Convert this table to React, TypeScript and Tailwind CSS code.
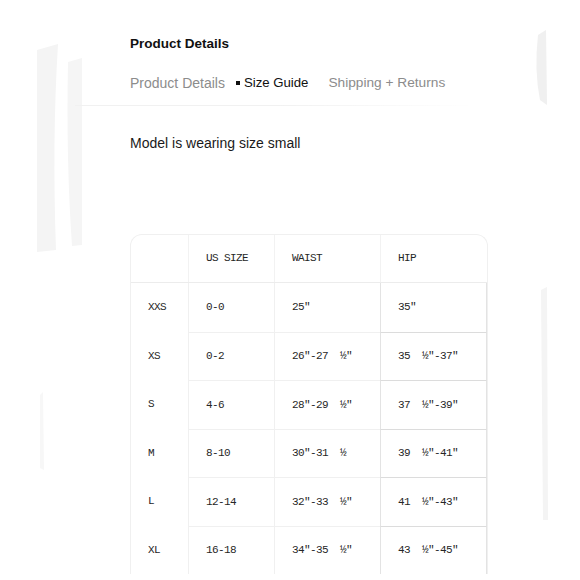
import React from "react";

const rows: [string, string, string, string][] = [
  ["XXS", "0-0", '25"', '35"'],
  ["XS", "0-2", '26"-27  ½"', '35  ½"-37"'],
  ["S", "4-6", '28"-29  ½"', '37  ½"-39"'],
  ["M", "8-10", '30"-31  ½', '39  ½"-41"'],
  ["L", "12-14", '32"-33  ½"', '41  ½"-43"'],
  ["XL", "16-18", '34"-35  ½"', '43  ½"-45"'],
];

function Backdrop() {
  return (
    <svg
      className="pointer-events-none absolute inset-0"
      width="580"
      height="580"
      viewBox="0 0 580 580"
    >
      <path d="M37 50 L58 44 Q52 140 56 250 L37 252 Z" fill="#f4f4f4" />
      <path d="M68 62 L82 58 L82 245 L72 246 Q66 160 68 62 Z" fill="#f5f5f5" />
      <path d="M40 395 L43 392 L44 470 L40 468 Z" fill="#f7f7f7" />
      <path d="M538 35 L546 30 L547 105 L540 100 Q534 70 538 35 Z" fill="#f0f0f0" />
      <path d="M541 290 L547 287 L548 520 L543 520 Z" fill="#f4f4f4" />
    </svg>
  );
}

export default function App() {
  return (
    <div className="relative w-[580px] h-[580px] overflow-hidden bg-white font-['Liberation_Sans',Arial,sans-serif] text-[#111]">
      <Backdrop />
      <div className="relative pl-[75px] pt-[35px]">
        <div className="pl-[55px]">
          <h2 className="text-[13.5px] font-bold leading-[18px] text-[#111]">Product Details</h2>
          <div className="mt-[20px] flex items-center leading-[20px]">
            <span className="text-[14px] text-[#8c8c8c]">Product Details</span>
            <span className="ml-[11px] mr-[4px] h-[4px] w-[4px] bg-[#111]" />
            <span className="text-[13.2px] text-[#111]">Size Guide</span>
            <span className="ml-[20px] text-[13.7px] text-[#8c8c8c]">Shipping + Returns</span>
          </div>
        </div>
        <div className="mt-[12px] h-px w-[400px] bg-gradient-to-r from-[#f1f1f1] via-[#f1f1f1] to-transparent" />
        <div className="pl-[55px]">
          <p className="mt-[27px] text-[14px] leading-[20px] text-[#1a1a1a]">Model is wearing size small</p>

          <div className="mt-[81px] w-[358px] rounded-t-[12px] border border-b-0 border-[#f0f0f0] font-['Liberation_Mono','Courier_New',monospace] text-[11px] tracking-[-0.6px] text-[#262626]">
            <div className="grid h-[48px] grid-cols-[57px_86px_106px_107px] items-stretch border-b border-[#ececec]">
              <div />
              <div className="flex items-center border-l border-[#f2f2f2] pl-[17px]">US SIZE</div>
              <div className="flex items-center border-l border-[#f2f2f2] pl-[17px]">WAIST</div>
              <div className="flex items-center border-l border-[#f2f2f2] pl-[17px]">HIP</div>
            </div>
            {rows.map((r, i) => (
              <div
                key={r[0]}
                className="grid h-[48.5px] grid-cols-[57px_86px_106px_107px] items-stretch"
              >
                <div className="flex items-center pl-[17px]">{r[0]}</div>
                <div
                  className={`flex items-center border-l border-[#f0f0f0] pl-[17px] ${
                    i > 0 ? "border-t" : ""
                  }`}
                >
                  {r[1]}
                </div>
                <div
                  className={`flex items-center whitespace-pre border-l border-[#f0f0f0] pl-[17px] ${
                    i > 0 ? "border-t" : ""
                  }`}
                >
                  {r[2]}
                </div>
                <div
                  className={`flex items-center whitespace-pre border-l border-r border-[#e3e3e3] pl-[17px] ${
                    i > 0 ? "border-t border-t-[#dcdcdc]" : ""
                  }`}
                >
                  {r[3]}
                </div>
              </div>
            ))}
          </div>
        </div>
      </div>
    </div>
  );
}
